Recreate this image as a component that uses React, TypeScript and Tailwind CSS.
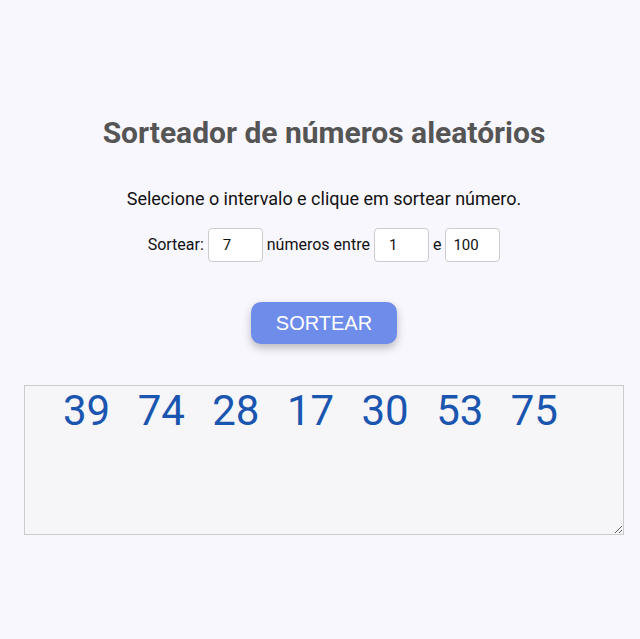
import React, { useState } from 'react';

const App = () => {
  const [qtd, setQtd] = useState('7');
  const [min, setMin] = useState('1');
  const [max, setMax] = useState('100');
  const numeros = [39, 74, 28, 17, 30, 53, 75];

  return (
    <div className="min-h-screen bg-[#f9f7fe] font-['Roboto',sans-serif] text-[#111] flex flex-col items-center pt-[112px] pl-[8px]">
      {/* Título */}
      <h1 className="text-[30px] font-bold text-[#555] leading-[42px]">Sorteador de números aleatórios</h1>

      <p className="mt-[34px] text-[18px] leading-[22px]">Selecione o intervalo e clique em sortear número.</p>

      {/* Intervalo */}
      <div className="mt-[18px] flex items-center gap-[4px] text-[16px]">
        <span>Sortear:</span>
        <input
          value={qtd}
          onChange={(e) => setQtd(e.target.value)}
          className="w-[55px] h-[34px] rounded-[4px] border border-[#ccc] bg-white px-[14px] text-[15px] outline-none"
        />
        <span>números entre</span>
        <input
          value={min}
          onChange={(e) => setMin(e.target.value)}
          className="w-[55px] h-[34px] rounded-[4px] border border-[#ccc] bg-white px-[14px] text-[15px] outline-none"
        />
        <span>e</span>
        <input
          value={max}
          onChange={(e) => setMax(e.target.value)}
          className="w-[55px] h-[34px] rounded-[4px] border border-[#ccc] bg-white px-[7px] text-[15px] outline-none"
        />
      </div>

      {/* Botão */}
      <button className="mt-[40px] w-[146px] h-[42px] rounded-[10px] bg-[#6e8ce9] text-white text-[20px] font-['Liberation_Sans',Arial,sans-serif] shadow-[0_4px_8px_rgba(0,0,0,0.25)]">
        SORTEAR
      </button>

      {/* Resultado */}
      <textarea
        readOnly
        value={numeros.join(' ')}
        className="mt-[41px] w-[600px] h-[150px] border border-[#ccc] bg-[#f6f6f9] pl-[38px] pt-0 text-[42px] leading-[49px] text-[#1a55b0] [word-spacing:17px] outline-none"
      />
    </div>
  );
};

export default App;
